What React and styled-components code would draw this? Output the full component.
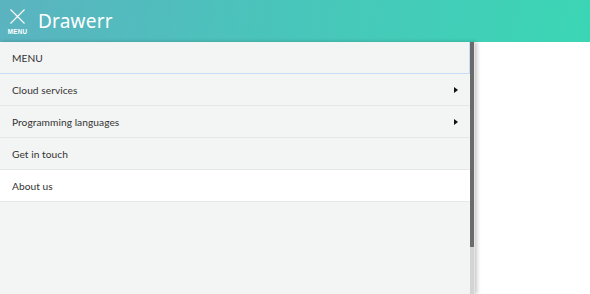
import React from 'react';
import styled, { createGlobalStyle } from 'styled-components';

const items = [
    { label: 'MENU', focused: true },
    { label: 'Cloud services', arrow: true },
    { label: 'Programming languages', arrow: true },
    { label: 'Get in touch' },
    { label: 'About us', active: true },
];

function App() {
    return (
        <>
            <GlobalStyle />
            <Page>
                <Header>
                    <MenuToggle>
                        <svg width="15" height="15" viewBox="0 0 15 15">
                            <path d="M0.5 0.5 L14.5 14.5 M14.5 0.5 L0.5 14.5" stroke="#fff" strokeWidth="1.1" fill="none" />
                        </svg>
                        <ToggleLabel>MENU</ToggleLabel>
                    </MenuToggle>
                    <Title>Drawerr</Title>
                </Header>
                <Body>
                    <Drawer>
                        <DrawerContent>
                            <MenuList>
                                {items.map((item) => (
                                    <MenuItem key={item.label} $focused={item.focused} $active={item.active}>
                                        <span>{item.label}</span>
                                        {item.arrow && <Caret />}
                                    </MenuItem>
                                ))}
                            </MenuList>
                        </DrawerContent>
                        <ScrollTrack>
                            <ScrollThumb />
                        </ScrollTrack>
                    </Drawer>
                </Body>
            </Page>
        </>
    );
}

export default App;

const GlobalStyle = createGlobalStyle`
    html, body {
        margin: 0;
        padding: 0;
        background: #fff;
    }
    body {
        font-family: "Lato", "Noto Sans", sans-serif;
    }
`;

const Page = styled.div`
    display: flex;
    flex-direction: column;
    height: 100vh;
    overflow: hidden;
`;

const Header = styled.header`
    display: flex;
    align-items: center;
    height: 42px;
    flex-shrink: 0;
    padding-left: 7px;
    background: linear-gradient(100deg, #5bb3c0 0%, #4ac4bb 45%, #3bd6b5 100%);
    color: #fff;
`;

const MenuToggle = styled.div`
    display: flex;
    flex-direction: column;
    align-items: center;
    width: 21px;
    margin-top: 2px;
`;

const ToggleLabel = styled.span`
    font-family: "Liberation Sans", sans-serif;
    font-weight: 700;
    font-size: 6.3px;
    line-height: 7px;
    margin-top: 4px;
    letter-spacing: 0.2px;
`;

const Title = styled.h1`
    margin: 0 0 0 10px;
    font-family: "Noto Sans", sans-serif;
    font-size: 19px;
    font-weight: 400;
    letter-spacing: 0.2px;
`;

const Body = styled.div`
    flex: 1;
    display: flex;
    min-height: 0;
`;

const Drawer = styled.nav`
    display: flex;
    width: 475px;
    height: 100%;
    background: #f3f5f4;
    box-shadow: 2px 0 4px rgba(0, 0, 0, 0.22);
`;

const DrawerContent = styled.div`
    flex: 1;
    min-width: 0;
`;

const ScrollTrack = styled.div`
    width: 4px;
    background: #d4d4d4;
    border-right: 1px solid #e4e4e4;
`;

const ScrollThumb = styled.div`
    height: 205px;
    background: #6b6b6b;
`;

const MenuList = styled.ul`
    list-style: none;
    margin: 0;
    padding: 0;
`;

const MenuItem = styled.li`
    display: flex;
    align-items: center;
    justify-content: space-between;
    box-sizing: border-box;
    height: 32px;
    padding: 1px 11px 0 12px;
    font-size: 10.2px;
    letter-spacing: 0.05px;
    color: #333;
    background: ${(p) => (p.$active ? '#fff' : 'transparent')};
    border-bottom: 1px solid ${(p) => (p.$focused ? '#c9dcf5' : '#e6e8e7')};
    border-right: 1px solid ${(p) => (p.$focused ? '#c9dcf5' : 'transparent')};
`;

const Caret = styled.span`
    width: 0;
    height: 0;
    border-top: 3.5px solid transparent;
    border-bottom: 3.5px solid transparent;
    border-left: 4px solid #111;
`;
